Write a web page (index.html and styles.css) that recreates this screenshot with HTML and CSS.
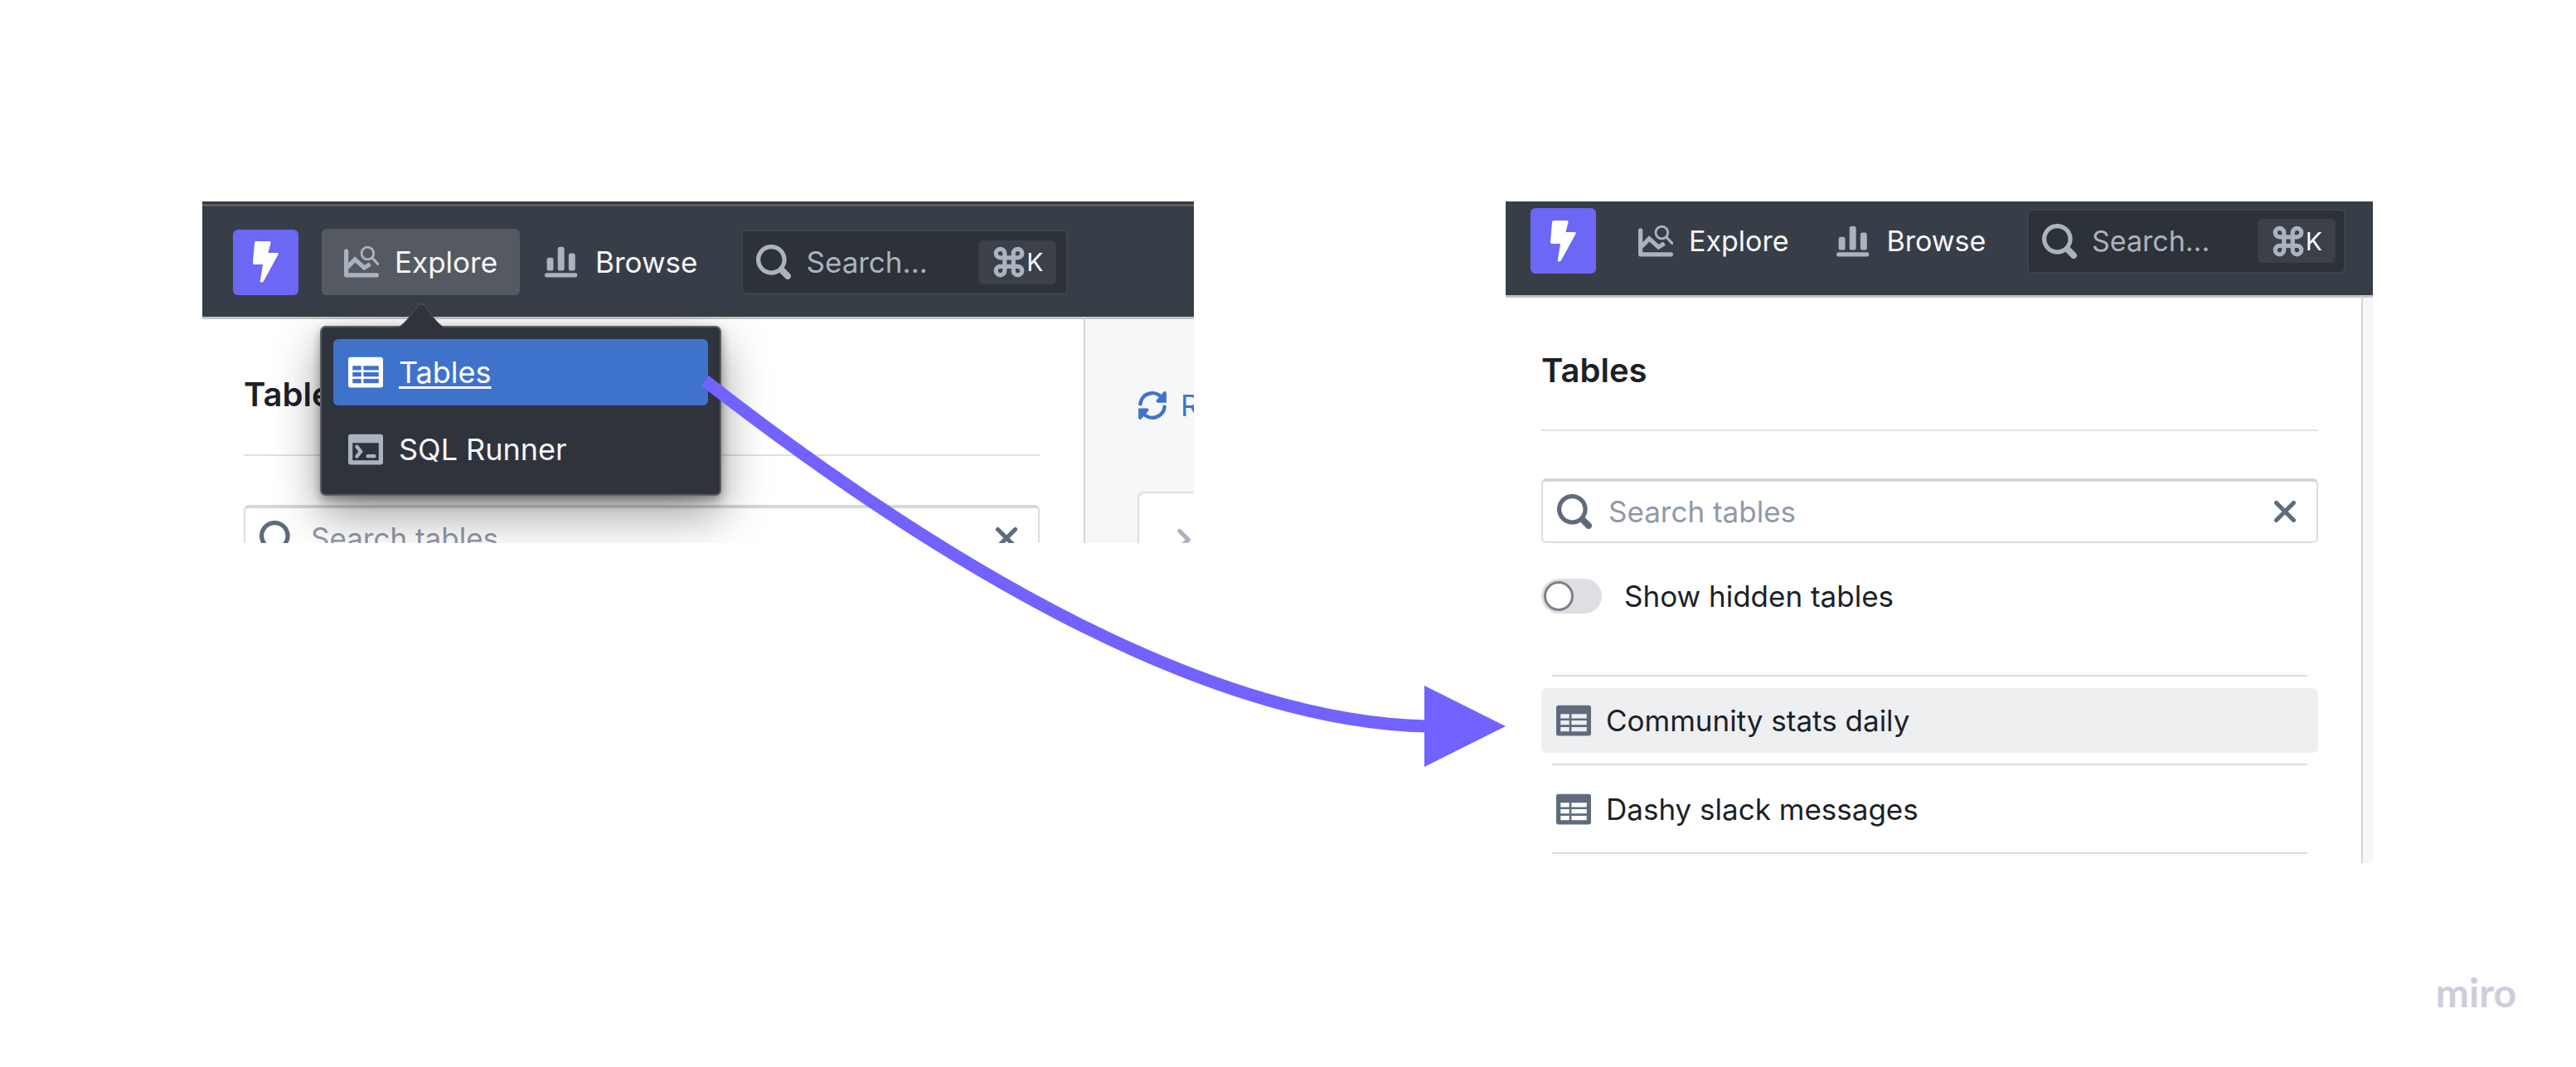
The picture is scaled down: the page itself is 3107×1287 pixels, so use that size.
FILE: index.html
```html
<!DOCTYPE html>
<html lang="en">
<head>
<meta charset="utf-8">
<title>Explore tables flow</title>
<link rel="stylesheet" href="styles.css">
</head>
<body>
<svg class="sprite" aria-hidden="true">
  <symbol id="i-bolt" viewBox="0 0 34 52"><path d="M5 1h16q2 0 1.500 2l-3 12h11q2 0 1 2L14 49q-1 2-3 1.500t-1-2.500l3-19H3q-2 0-2-2L3 3q0-2 2-2z"/></symbol>
  <symbol id="i-explore" viewBox="0 0 16 16"><path d="M1 3v11h14" fill="none" stroke="currentColor" stroke-width="2" stroke-linecap="round" stroke-linejoin="round"/><path d="M1.500 10.500 5 6.800 9.300 10.700 12 9" fill="none" stroke="currentColor" stroke-width="2"/><circle cx="10.800" cy="4" r="2.800" fill="none" stroke="currentColor" stroke-width="1.100"/><path d="m12.900 6.100 2.600 2.800" stroke="currentColor" stroke-width="1.200" stroke-linecap="round"/></symbol>
  <symbol id="i-browse" viewBox="0 0 16 16"><rect x="0" y="13" width="15" height="2" rx="1"/><rect x="1" y="6" width="3" height="6" rx="1"/><rect x="6" y="1" width="3" height="11" rx="1"/><rect x="11" y="4" width="3" height="8" rx="1"/></symbol>
  <symbol id="i-search" viewBox="0 0 16 16"><path d="M15.550 13.430l-2.670-2.680a6.940 6.940 0 0 0 1.110-3.760c0-3.870-3.130-7-7-7s-7 3.130-7 7 3.130 7 7 7c1.390 0 2.680-.42 3.760-1.110l2.680 2.670a1.498 1.498 0 1 0 2.120-2.120zm-8.560-1.440c-2.760 0-5-2.240-5-5s2.240-5 5-5 5 2.240 5 5-2.240 5-5 5z"/></symbol>
  <symbol id="i-command" viewBox="0 0 16 16"><path d="M6 6H4a2 2 0 1 1 2-2v8a2 2 0 1 1-2-2h8a2 2 0 1 1-2 2V4a2 2 0 1 1 2 2H6" fill="none" stroke="currentColor" stroke-width="2"/></symbol>
  <symbol id="i-table" viewBox="0 0 16 16"><path d="M15 1H1c-.6 0-1 .5-1 1v12c0 .6.4 1 1 1h14c.6 0 1-.4 1-1V2c0-.5-.4-1-1-1zM6 13H2v-2h4v2zm0-3H2V8h4v2zm0-3H2V5h4v2zm8 6H7v-2h7v2zm0-3H7V8h7v2zm0-3H7V5h7v2z"/></symbol>
  <symbol id="i-console" viewBox="0 0 16 16"><path d="M15 1H1c-.6 0-1 .5-1 1v12c0 .6.4 1 1 1h14c.6 0 1-.4 1-1V2c0-.5-.4-1-1-1zm-1 12H2V5h12z"/><path d="M4 6.800l1.800 2.200L4 11.200M9 11.100h3" fill="none" stroke="currentColor" stroke-width="1.700" stroke-linecap="round" stroke-linejoin="round"/></symbol>
  <symbol id="i-cross" viewBox="0 0 16 16"><path d="m4 4 8 8m0-8-8 8" stroke="currentColor" stroke-width="2" stroke-linecap="round"/></symbol>
  <symbol id="i-chevron" viewBox="0 0 16 16"><path d="m6 4 4 4-4 4" fill="none" stroke="currentColor" stroke-width="2" stroke-linecap="round" stroke-linejoin="round"/></symbol>
  <symbol id="i-refresh" viewBox="0 0 16 16"><g fill="none" stroke="currentColor" stroke-width="2" stroke-linecap="round"><path d="M1.500 7.200a6.500 6.500 0 0 1 11.500-3.400M14.500 8.800a6.500 6.500 0 0 1-11.500 3.400"/></g><path d="M14.200.5Q15.500.3 15.500 1.500V6.500H10.600Q9.500 5.800 10.300 5zM1.800 15.500Q.5 15.700.5 14.500V9.500H5.400Q6.500 10.200 5.700 11z"/></symbol>
</svg>

<main class="canvas">
  <section class="shot shot-menu" aria-label="Explore menu">
    <header class="bar bar-tall">
      <a class="logo" href="#" aria-label="Home"><svg><use href="#i-bolt"/></svg></a>
      <nav class="nav">
        <div class="dropdown">
          <button class="nav-item is-open" type="button" aria-expanded="true"><svg class="icon"><use href="#i-explore"/></svg>Explore</button>
          <div class="menu">
            <svg class="menu-tip" viewBox="0 0 58 30"><path d="M0 30 C10 26 22 6 26 2 Q29 0 32 2 C36 6 48 26 58 30z"/></svg>
            <a class="menu-item is-active" href="#"><svg class="icon"><use href="#i-table"/></svg><span>Tables</span></a>
            <a class="menu-item" href="#"><svg class="icon"><use href="#i-console"/></svg><span>SQL Runner</span></a>
          </div>
        </div>
        <button class="nav-item" type="button"><svg class="icon"><use href="#i-browse"/></svg>Browse</button>
      </nav>
      <button class="omni" type="button"><svg class="icon"><use href="#i-search"/></svg><span class="omni-text">Search...</span><kbd class="keys"><svg class="icon"><use href="#i-command"/></svg>K</kbd></button>
    </header>
    <div class="body">
      <div class="panel">
        <h2 class="title">Tables</h2>
        <label class="field"><svg class="icon"><use href="#i-search"/></svg><input type="text" placeholder="Search tables" aria-label="Search tables"><button class="clear" type="button" aria-label="Clear"><svg class="icon"><use href="#i-cross"/></svg></button></label>
      </div>
      <div class="side">
        <button class="refresh" type="button"><svg><use href="#i-refresh"/></svg>R</button>
        <div class="card"><svg class="icon"><use href="#i-chevron"/></svg></div>
      </div>
    </div>
  </section>

  <section class="shot" aria-label="Tables page">
    <header class="bar">
      <a class="logo" href="#" aria-label="Home"><svg><use href="#i-bolt"/></svg></a>
      <nav class="nav">
        <button class="nav-item" type="button"><svg class="icon"><use href="#i-explore"/></svg>Explore</button>
        <button class="nav-item" type="button"><svg class="icon"><use href="#i-browse"/></svg>Browse</button>
      </nav>
      <button class="omni" type="button"><svg class="icon"><use href="#i-search"/></svg><span class="omni-text">Search...</span><kbd class="keys"><svg class="icon"><use href="#i-command"/></svg>K</kbd></button>
    </header>
    <div class="body">
      <div class="panel">
        <h2 class="title">Tables</h2>
        <label class="field"><svg class="icon"><use href="#i-search"/></svg><input type="text" placeholder="Search tables" aria-label="Search tables"><button class="clear" type="button" aria-label="Clear"><svg class="icon"><use href="#i-cross"/></svg></button></label>
        <label class="switch"><input type="checkbox">Show hidden tables</label>
        <ul class="list">
          <li><a class="row is-hover" href="#"><svg class="icon"><use href="#i-table"/></svg>Community stats daily</a></li>
          <li><a class="row" href="#"><svg class="icon"><use href="#i-table"/></svg>Dashy slack messages</a></li>
        </ul>
      </div>
      <div class="side"></div>
    </div>
  </section>

  <svg class="connector" viewBox="0 0 3107 1287" aria-hidden="true">
    <path d="M850 459C1250 770 1530 872 1722 876" fill="none" stroke="#7262ff" stroke-width="15"/>
    <path d="M1718 827v98l98-49z" fill="#7262ff"/>
  </svg>
</main>
<footer class="brand">miro</footer>
</body>
</html>
```

FILE: styles.css
```css
*, *::before, *::after { box-sizing: border-box; }
body {
  margin: 0;
  min-height: 100vh;
  display: flex;
  flex-direction: column;
  position: relative;
  background: #fff;
  color: #1c2127;
  font: 35px/48px Inter, "Liberation Sans", sans-serif;
}
svg { fill: currentColor; flex: none; }
button { font: inherit; color: inherit; border: 0; background: none; padding: 0; }
a { color: inherit; text-decoration: none; }
.sprite { position: absolute; width: 0; height: 0; }
.icon { width: 42px; height: 42px; color: #abb3bf; }

.canvas {
  flex: 1;
  display: grid;
  grid-template-columns: 1196fr 1046fr;
  gap: 376px;
  align-items: start;
  padding: 243px 245px 0 244px;
}
.shot { background: #fff; display: flex; flex-direction: column; }
.shot-menu { height: 412px; overflow: hidden; }

/* top bar */
.bar {
  flex: none;
  display: flex;
  align-items: center;
  height: 113px;
  padding: 0 33px 18px 30px;
  background: #383e47;
  color: #f6f7f9;
  font-size: 34px;
}
.bar-tall {
  height: 139px;
  padding: 4px 33px 0 37px;
  border-top: 3px solid #38393d;
  box-shadow: inset 0 3px #5b5c60;
  font-size: 35px;
}
.logo {
  display: grid;
  place-items: center;
  width: 79px;
  height: 79px;
  border-radius: 6px;
  background: #6c67f5;
  color: #fff;
}
.logo svg { width: 34px; height: 52px; }
.nav { display: flex; gap: 3px; margin-left: 24px; }
.bar-tall .nav { margin-left: 28px; }
.nav-item {
  display: flex;
  align-items: center;
  gap: 19px;
  height: 80px;
  padding: 0 27px;
  border-radius: 6px;
}
.nav-item.is-open { background: #555962; }
.omni {
  display: flex;
  align-items: center;
  gap: 18px;
  width: 384px;
  height: 78px;
  margin-left: auto;
  padding: 0 10px 0 16px;
  border-radius: 6px;
  border: 2px solid #3e434c;
  background: #2d3138;
  color: #abb3bf;
}
.bar-tall .omni { margin: 0 auto 0 26px; width: 394px; padding-right: 12px; }
.omni-text { flex: 1; text-align: left; }
.keys {
  display: flex;
  align-items: center;
  height: 53px;
  padding: 0 16px;
  border-radius: 6px;
  background: #3b4049;
  color: #f6f7f9;
  font: 30px/40px Inter, "Liberation Sans", sans-serif;
}

/* explore menu */
.dropdown { position: relative; }
.menu {
  position: absolute;
  z-index: 1;
  top: 117px;
  left: -2px;
  width: 484px;
  display: grid;
  gap: 13px;
  padding: 14px;
  border: 2px solid #5a5d62;
  border-radius: 7px;
  background: #2f343c;
  box-shadow: 0 5px 12px rgba(0, 0, 0, .35), 0 22px 56px rgba(0, 0, 0, .4);
  font-size: 36px;
}
.menu-tip {
  position: absolute;
  width: 58px;
  height: 30px;
  top: -29px;
  left: 91px;
  color: #2f343c;
  filter: drop-shadow(0 -1px #5a5d62);
}
.menu-item {
  display: flex;
  align-items: center;
  gap: 19px;
  height: 80px;
  padding: 0 18px;
  border-radius: 6px;
}
.menu-item.is-active { background: #3f72cb; color: #fff; }
.is-active .icon { color: #fff; }
.is-active span { text-decoration: underline; text-decoration-thickness: 3px; text-underline-offset: 4px; }

/* page body */
.body {
  flex: 1;
  display: flex;
  box-shadow: inset 0 3px #c4c5c7;
}
.panel {
  flex: 1;
  padding: 63px 52px 11px 43px;
  border-right: 2px solid #d3d5d8;
}
.shot-menu .panel { flex: none; width: 1065px; padding: 66px 53px 0 50px; }
.title {
  margin: 0 0 57px;
  padding-bottom: 43px;
  border-bottom: 2px solid #dfe0e2;
  font-size: 40px;
  line-height: 56px;
  font-weight: 600;
}
.shot-menu .title { margin-bottom: 59px; padding-bottom: 44px; }
.field {
  display: flex;
  align-items: center;
  gap: 20px;
  height: 78px;
  padding: 0 17px;
  border: 2px solid #dcdee1;
  border-top: 4px solid #d3d6da;
  border-radius: 6px;
}
.field .icon { color: #5f6b7c; }
.field input {
  flex: 1;
  min-width: 0;
  border: 0;
  outline: 0;
  padding: 0;
  background: none;
  font: inherit;
}
.field input::placeholder { color: #8f99a8; opacity: 1; }
.clear { display: flex; }
.switch {
  display: flex;
  align-items: center;
  gap: 27px;
  margin: 40px 0 71px;
}
.switch input {
  appearance: none;
  width: 73px;
  height: 42px;
  margin: 0;
  padding: 3px;
  border-radius: 21px;
  background: #dddfe3;
}
.switch input::before {
  content: "";
  display: block;
  width: 36px;
  height: 36px;
  border: 3px solid #7d8086;
  border-radius: 50%;
  background: #fff;
}
.list { list-style: none; margin: 0; padding: 0; }
.list li::before, .list li:last-child::after {
  content: "";
  display: block;
  height: 2px;
  margin: 0 13px;
  background: #dcdddf;
}
.row {
  display: flex;
  align-items: center;
  gap: 18px;
  height: 78px;
  margin: 14px 0 13px;
  padding: 0 18px;
  border-radius: 6px;
}
.row.is-hover { background: #edeff1; }
.row .icon { color: #5f6b7c; }
.side { width: 12px; background: #f6f7f9; box-shadow: inset 0 3px #c4c5c7; }
.shot-menu .side { flex: 1; overflow: hidden; padding: 83px 0 0 63px; }
.refresh {
  display: flex;
  align-items: center;
  gap: 16px;
  color: #3f72cb;
}
.refresh svg { width: 36px; height: 36px; }
.card {
  height: 120px;
  margin-top: 80px;
  padding: 35px 0 0 33px;
  border: 2px solid #dcdee1;
  border-right: 0;
  border-radius: 8px 0 0 0;
  background: #fff;
}

.connector { position: absolute; z-index: 2; top: 0; left: 0; width: 100%; }
.brand {
  padding: 0 72px 62px;
  color: #cfcdd9;
  font: bold 48px/56px Lato, sans-serif;
  text-align: right;
}
```
